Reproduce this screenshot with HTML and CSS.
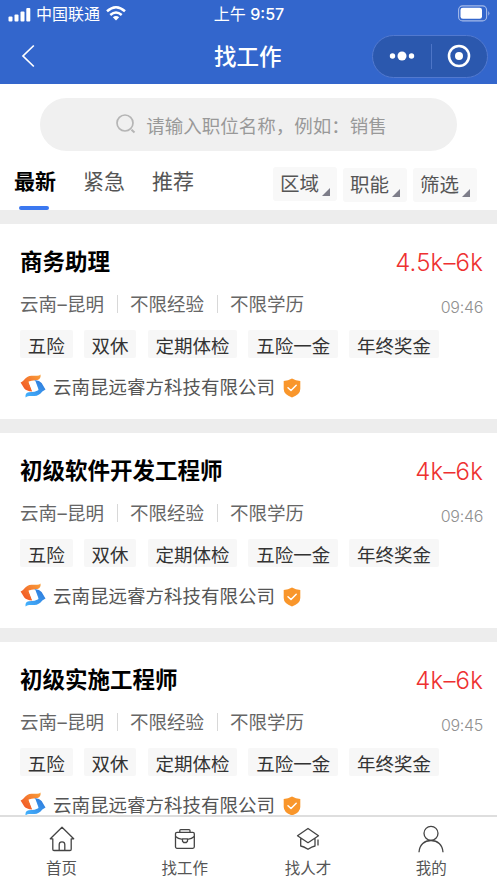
FILE: index.html
```html
<!DOCTYPE html>
<html lang="zh-CN">
<head>
<meta charset="utf-8">
<title>找工作</title>
<link rel="stylesheet" href="styles.css">
</head>
<body>
<svg width="0" height="0" class="defs" aria-hidden="true">
  <defs>
    <linearGradient id="warm" x1="0" y1="1" x2="1" y2="0"><stop offset="0" stop-color="#f04c23"/><stop offset="1" stop-color="#f9a13a"/></linearGradient>
    <linearGradient id="cool" x1="0" y1="1" x2="1" y2="0"><stop offset="0" stop-color="#45b5ff"/><stop offset="1" stop-color="#2d75d8"/></linearGradient>
    <symbol id="logo" viewBox="0 0 26 24">
      <path fill="url(#warm)" d="M3.500 6.500Q7 2 11.500 1.800L17 1.800Q19.500 1.800 20.500.6Q21.200 5 17.500 6L11.500 6.700L8.500 7.800L12.200 17.600Q6.500 17.300 4.300 14.600L.6 8.600Q2 8 3.500 6.500Z"/>
      <path fill="url(#cool)" d="M14.500 6.400Q19 5.900 21.600 9L25.500 15.600Q24 16.600 22.300 17.400Q19 21.800 14.500 21.900L9 22Q7 22.100 5.500 23.500Q5 18.700 8.800 18.300L14.500 17.700L18.300 16.200Z"/>
      <path fill="#fff" d="M8.700 7.800L15.400 7L18.600 15.800L12.200 16.800Z"/>
    </symbol>
    <symbol id="shield" viewBox="0 0 18 20">
      <path fill="#f9962b" d="M9 .6Q12.800 3 17.300 3V11Q17.300 16.500 9 19.400Q.7 16.500.7 11V3Q5.200 3 9 .6Z"/>
      <path fill="none" stroke="#fff" stroke-width="1.500" stroke-linecap="round" stroke-linejoin="round" d="M5 9.700L8 12.500L13.200 7.200"/>
    </symbol>
  </defs>
</svg>
<div class="app">
  <header class="header">
    <div class="status">
      <div class="carrier">
        <svg width="23" height="15" viewBox="0 0 23 15" fill="#fff"><rect x=".5" y="9.500" width="4" height="5" rx="1"/><rect x="6.500" y="7.500" width="4" height="7" rx="1"/><rect x="12.500" y="4.500" width="4" height="10" rx="1"/><rect x="18.300" y="1" width="4" height="13.500" rx="1"/></svg>
        <span>中国联通</span>
        <svg class="wifi" width="20" height="15" viewBox="0 0 20 15" fill="none" stroke="#fff" stroke-width="2.500"><path d="M1 5.300Q10-2.700 19 5.300"/><path d="M4.300 9Q10 4 15.700 9"/><path fill="#fff" stroke="none" d="M6.800 11.200Q10 8.600 13.200 11.200L10 14.500Z"/></svg>
      </div>
      <div class="clock">上午 <b>9:57</b></div>
      <svg class="battery" width="32" height="17" viewBox="0 0 32 17"><rect x=".6" y=".9" width="28" height="15" rx="4" fill="none" stroke="#a5bae9" stroke-width="1.100"/><rect x="2.500" y="2.800" width="21.500" height="11" rx="2.300" fill="#fff"/><path d="M30.300 6Q32.500 8.300 30.300 10.800Z" fill="#a5bae9"/></svg>
    </div>
    <div class="nav">
      <svg width="14" height="24" viewBox="0 0 14 24" fill="none" stroke="#fff" stroke-width="1.700"><path d="M12.800 1.500L2 12L12.800 22.500"/></svg>
      <h1>找工作</h1>
      <div class="capsule">
        <svg width="26" height="10" viewBox="0 0 26 10" fill="#fff"><circle cx="3.500" cy="5" r="2.700"/><circle cx="13" cy="5" r="4.500"/><circle cx="22.500" cy="5" r="2.700"/></svg>
        <i></i>
        <svg width="24" height="24" viewBox="0 0 24 24"><circle cx="12" cy="12" r="10" fill="none" stroke="#fff" stroke-width="2.600"/><circle cx="12" cy="12" r="4" fill="#fff"/></svg>
      </div>
    </div>
  </header>
  <div class="top">
    <div class="search">
      <svg width="20" height="20" viewBox="0 0 20 20" fill="none" stroke="#b5b5b5" stroke-width="1.700"><circle cx="9" cy="9" r="8"/><path stroke-width="2" d="M15.500 15.800L18.500 18.500"/></svg>
      <span>请输入职位名称，例如：销售</span>
    </div>
    <div class="bar">
      <div class="tabs"><span class="active">最新</span><span>紧急</span><span>推荐</span></div>
      <div class="filters"><span class="first">区域</span><span>职能</span><span>筛选</span></div>
    </div>
  </div>
  <main class="jobs">
    <article class="job">
      <div class="row head"><h2>商务助理</h2><span class="pay">4.5k–6k</span></div>
      <div class="row meta"><div class="facts"><span>云南<em>–</em>昆明</span><span>不限经验</span><span>不限学历</span></div><time>09:46</time></div>
      <div class="tags"><span>五险</span><span>双休</span><span>定期体检</span><span>五险一金</span><span>年终奖金</span></div>
      <div class="company"><svg class="logo"><use href="#logo"/></svg><span>云南昆远睿方科技有限公司</span><svg class="shield"><use href="#shield"/></svg></div>
    </article>
    <article class="job">
      <div class="row head"><h2>初级软件开发工程师</h2><span class="pay">4k–6k</span></div>
      <div class="row meta"><div class="facts"><span>云南<em>–</em>昆明</span><span>不限经验</span><span>不限学历</span></div><time>09:46</time></div>
      <div class="tags"><span>五险</span><span>双休</span><span>定期体检</span><span>五险一金</span><span>年终奖金</span></div>
      <div class="company"><svg class="logo"><use href="#logo"/></svg><span>云南昆远睿方科技有限公司</span><svg class="shield"><use href="#shield"/></svg></div>
    </article>
    <article class="job">
      <div class="row head"><h2>初级实施工程师</h2><span class="pay">4k–6k</span></div>
      <div class="row meta"><div class="facts"><span>云南<em>–</em>昆明</span><span>不限经验</span><span>不限学历</span></div><time>09:45</time></div>
      <div class="tags"><span>五险</span><span>双休</span><span>定期体检</span><span>五险一金</span><span>年终奖金</span></div>
      <div class="company"><svg class="logo"><use href="#logo"/></svg><span>云南昆远睿方科技有限公司</span><svg class="shield"><use href="#shield"/></svg></div>
    </article>
  </main>
  <nav class="tabbar">
    <a><svg width="28" height="28" viewBox="0 0 28 28"><path d="M4.800 13.800H2.300L14 2.300L25.700 13.800H23.200V24.200Q23.200 25.500 22 25.500H6Q4.800 25.500 4.800 24.200ZM11.200 25.500V19.500Q11.200 16.800 14 16.800Q16.800 16.800 16.800 19.500V25.500"/></svg><span>首页</span></a>
    <a><svg width="28" height="28" viewBox="0 0 28 28"><rect x="4.500" y="7.300" width="18.800" height="16" rx="1.500"/><path d="M8.800 7V5.500Q8.800 4.600 9.700 4.600H18Q19 4.600 19 5.500V7M4.500 11.500Q7 14 11.500 14.300M16.500 14.300Q20.800 14 23.300 11.500M11.500 13.800H16.500V16.300L15.300 17.500H12.700L11.500 16.300Z"/></svg><span>找工作</span></a>
    <a><svg width="28" height="28" viewBox="0 0 28 28"><path d="M14 3.500L24.500 10.800L14 17.700L3.500 10.800ZM6.700 13.500V21Q9.500 21.300 14 24.300Q18 21.600 21 21V13.500M24 14.500V20.500"/></svg><span>找人才</span></a>
    <a><svg width="28" height="28" viewBox="0 0 28 28"><circle cx="14" cy="8.300" r="7"/><path d="M2 27.300C2.500 19.500 7.500 15.500 14 15.500S25.500 19.500 26 27.300"/></svg><span>我的</span></a>
  </nav>
</div>
</body>
</html>
```
FILE: styles.css
```css
* { box-sizing: border-box; }
body { margin: 0; background: #fff; color: #555; font-family: Inter, "Noto Sans CJK SC", sans-serif; }
h1, h2 { margin: 0; }
svg { display: block; flex: none; }
.defs { position: absolute; }
.app { width: 497px; height: 883px; overflow: hidden; display: flex; flex-direction: column; }

.header { height: 84px; flex: none; background: #3366cc; color: #fff; }
.status { height: 28px; display: grid; grid-template-columns: 1fr auto 1fr; align-items: center; padding: 0 8px; font-size: 16px; line-height: 27px; }
.carrier { display: flex; align-items: center; gap: 6px; }
.carrier span { margin-left: -1px; }
.wifi { margin-top: -2px; }
.clock { padding-left: 1px; }
.clock b { font-weight: 500; font-size: 16px; }
.battery { justify-self: end; margin-right: -1px; margin-top: -2px; }
.nav { height: 56px; display: grid; grid-template-columns: 193px auto 1fr; align-items: center; padding: 0 9px 0 21px; }
.nav h1 { font-size: 22.5px; font-weight: 500; line-height: 40px; padding-top: 1px; }
.capsule { justify-self: end; width: 116px; height: 43px; border: 1px solid #5279cf; border-radius: 22px; background: #2b58ae; display: flex; align-items: center; padding: 0 16px; justify-content: space-between; }
.capsule i { width: 1px; height: 25px; background: #4d75c7; }

.top { flex: none; height: 126px; padding-top: 14px; }
.search { width: 417px; height: 53px; margin: 0 auto 0 40px; border-radius: 27px; background: #f0f0f0; color: #999; display: flex; align-items: center; justify-content: center; gap: 10px; padding-left: 6px; font-size: 18.5px; }
.search svg { margin-top: -2px; }
.bar { height: 59px; display: flex; justify-content: space-between; padding: 0 20px 0 14px; }
.tabs { display: flex; gap: 27px; font-size: 21px; line-height: 61px; }
.tabs span { display: flex; flex-direction: column; align-items: center; }
.tabs .active { color: #000; font-weight: 700; }
.tabs .active::after { content: ""; width: 30px; height: 4px; border-radius: 2px; background: #3b78f0; margin: -6px 2px 0 0; }
.filters { display: flex; gap: 6px; padding-top: 17px; }
.filters span { width: 64px; height: 34px; background: #f8f8f8; border-radius: 3px; padding-left: 7px; font-size: 19.5px; line-height: 34px; display: flex; align-items: flex-end; gap: 3px; }
.filters .first { margin-top: -1px; }
.filters span::after { content: ""; width: 8px; height: 8px; margin-bottom: 5px; background: #7d7d89; clip-path: polygon(100% 0, 100% 100%, 0 100%); }

.jobs { flex: 1; min-height: 0; overflow: hidden; }
.job { height: 209px; border-top: 14px solid #ededed; padding: 20px 14px 0 20px; }
.row { display: flex; justify-content: space-between; align-items: center; }
.head { height: 36px; }
.head h2 { font-size: 22.5px; font-weight: 700; line-height: 36px; color: #000; }
.pay { color: #ee3030; font-size: 24px; font-weight: 350; letter-spacing: .15px; line-height: 36px; padding-top: 1px; }
.meta { height: 48px; font-size: 18.5px; color: #666; }
.facts { display: flex; align-items: center; }
.facts span { display: flex; align-items: center; line-height: 28px; }
.facts em { font-style: normal; width: 10px; display: flex; justify-content: center; }
.facts span + span::before { content: ""; width: 1px; height: 18px; background: #d8d8d8; margin: 0 12.5px 0 12.5px; }
.meta time { font-size: 16px; font-weight: 350; letter-spacing: -.3px; color: #909090; padding-top: 6px; }
.tags { display: flex; gap: 11.2px; margin-top: 2px; }
.tags span { height: 28px; line-height: 32px; padding: 0 7.8px; background: #f7f7f7; border-radius: 2px; font-size: 18.5px; color: #333; }
.company { display: flex; align-items: center; height: 34px; margin-top: 11px; font-size: 18.5px; }
.logo { width: 26px; height: 24px; margin-right: 7px; }
.shield { width: 18px; height: 20px; margin: 4px 0 0 8px; }

.tabbar { flex: none; height: 68px; border-top: 2px solid #dedede; background: #fff; display: grid; grid-template-columns: repeat(4, 123.2px); }
.tabbar a { display: flex; flex-direction: column; align-items: center; padding-top: 8px; font-size: 15.5px; line-height: 24px; }
.tabbar span { margin-top: 4px; }
.tabbar svg { fill: none; stroke: #444; stroke-width: 1.3; stroke-linejoin: round; }
```
